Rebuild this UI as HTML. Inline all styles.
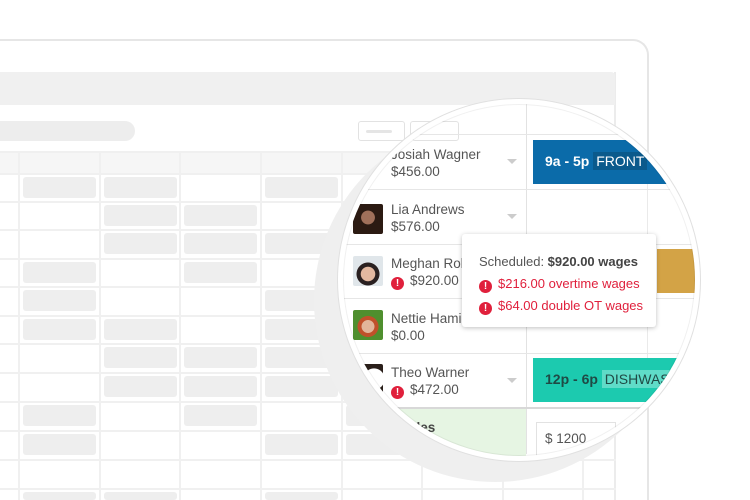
<!DOCTYPE html>
<html><head><meta charset="utf-8"><style>
*{margin:0;padding:0;box-sizing:border-box}
html,body{width:750px;height:500px;overflow:hidden}
body{background:#fff;position:relative;font-family:"Liberation Sans",sans-serif}
.a{position:absolute}
.frame{left:-20px;top:39px;width:669px;height:461px;border:2px solid #e6e6e6;border-bottom:none;border-radius:16px 16px 0 0}
.win{left:-10px;top:72px;width:626px;height:428px;border-right:2px solid #ececec}
.bar{left:0;top:72px;width:615px;height:33px;background:#f0f0f0;border-top-right-radius:4px}
.pill{left:-20px;top:121px;width:155px;height:20px;background:#ededed;border-radius:10px}
.hl{height:2px;background:#f0f0f0;left:0;width:616px}
.vl{width:2px;background:#f0f0f0;top:151px;height:349px}
.blk{background:#eeeeee;border-radius:3px;height:8px}
.b{background:#eeeeee;border-radius:3px;height:21px}
.circ{left:338px;top:99px;width:362px;height:362px;border-radius:50%;overflow:hidden;border:5px solid #fff;box-shadow:0 0 0 1px #e0e0e0;background:#fff}
.inner{position:absolute;left:-343px;top:-104px;width:750px;height:500px}
.shadow{left:314px;top:120px;width:362px;height:362px;border-radius:50%;background:#efefef}
.nm{font-size:13.5px;color:#555;line-height:17px}
.av{width:30px;height:30px;border-radius:2px}
.car{width:0;height:0;border-left:5px solid transparent;border-right:5px solid transparent;border-top:5px solid #ccc}
.ex{display:inline-block;width:13px;height:13px;border-radius:50%;background:#e0203c;color:#fff;font-size:10px;font-weight:bold;text-align:center;line-height:13px;vertical-align:-1px;margin-right:6px}
.red{color:#e0203c}
.rim{left:343px;top:104px;width:352px;height:352px;border-radius:50%;box-shadow:inset 0 0 0 1px rgba(0,0,0,.06)}
</style></head><body>
<div class="a frame"></div>
<div class="a win"></div>
<div class="a bar"></div>
<div class="a pill"></div>
<div class="a" style="left:358px;top:121px;width:47px;height:20px;border:1px solid #e2e2e2;border-radius:3px"></div>
<div class="a" style="left:366px;top:130px;width:26px;height:3px;background:#e5e5e5;border-radius:2px"></div>
<div class="a" style="left:410px;top:121px;width:47px;height:20px;border:1px solid #e2e2e2;border-radius:3px"></div>
<div class="a" style="left:0;top:151px;width:616px;height:23px;background:#f6f6f6"></div>
<div class="a hl" style="top:151px"></div>
<div class="a hl" style="top:173px"></div>
<div class="a hl" style="top:201px"></div>
<div class="a hl" style="top:229px"></div>
<div class="a hl" style="top:258px"></div>
<div class="a hl" style="top:286px"></div>
<div class="a hl" style="top:315px"></div>
<div class="a hl" style="top:343px"></div>
<div class="a hl" style="top:372px"></div>
<div class="a hl" style="top:401px"></div>
<div class="a hl" style="top:430px"></div>
<div class="a hl" style="top:459px"></div>
<div class="a hl" style="top:488px"></div>
<div class="a vl" style="left:18px"></div>
<div class="a vl" style="left:99px"></div>
<div class="a vl" style="left:179px"></div>
<div class="a vl" style="left:260px"></div>
<div class="a vl" style="left:341px"></div>
<div class="a vl" style="left:421px"></div>
<div class="a vl" style="left:502px"></div>
<div class="a vl" style="left:582px"></div>
<div class="a b" style="left:23px;top:177px;width:73px"></div><div class="a b" style="left:104px;top:177px;width:73px"></div><div class="a b" style="left:265px;top:177px;width:73px"></div>
<div class="a b" style="left:104px;top:205px;width:73px"></div><div class="a b" style="left:184px;top:205px;width:73px"></div>
<div class="a b" style="left:104px;top:233px;width:73px"></div><div class="a b" style="left:184px;top:233px;width:73px"></div><div class="a b" style="left:265px;top:233px;width:73px"></div>
<div class="a b" style="left:23px;top:262px;width:73px"></div><div class="a b" style="left:184px;top:262px;width:73px"></div>
<div class="a b" style="left:23px;top:290px;width:73px"></div><div class="a b" style="left:265px;top:290px;width:73px"></div>
<div class="a b" style="left:23px;top:319px;width:73px"></div><div class="a b" style="left:104px;top:319px;width:73px"></div><div class="a b" style="left:265px;top:319px;width:73px"></div>
<div class="a b" style="left:104px;top:347px;width:73px"></div><div class="a b" style="left:184px;top:347px;width:73px"></div><div class="a b" style="left:265px;top:347px;width:73px"></div>
<div class="a b" style="left:104px;top:376px;width:73px"></div><div class="a b" style="left:184px;top:376px;width:73px"></div><div class="a b" style="left:265px;top:376px;width:73px"></div>
<div class="a b" style="left:23px;top:405px;width:73px"></div><div class="a b" style="left:184px;top:405px;width:73px"></div><div class="a b" style="left:346px;top:405px;width:73px"></div>
<div class="a b" style="left:23px;top:434px;width:73px"></div><div class="a b" style="left:265px;top:434px;width:73px"></div><div class="a b" style="left:346px;top:434px;width:73px"></div>
<div class="a blk" style="left:23px;top:492px;width:73px"></div><div class="a blk" style="left:104px;top:492px;width:73px"></div><div class="a blk" style="left:265px;top:492px;width:73px"></div>

<div class="a shadow" style="height:362px"></div>
<div class="a circ"><div class="inner">
  <div class="a" style="left:358px;top:121px;width:47px;height:20px;border:1px solid #e2e2e2;border-radius:3px"></div>
  <div class="a" style="left:366px;top:130px;width:26px;height:3px;background:#e5e5e5;border-radius:2px"></div>
  <div class="a" style="left:412px;top:121px;width:47px;height:20px;border:1px solid #e2e2e2;border-radius:3px"></div>
  <div class="a" style="left:526px;top:104px;width:1px;height:350px;background:#e2e2e2"></div>
  <div class="a" style="left:647px;top:104px;width:1px;height:350px;background:#eaeaea"></div>
  <div class="a" style="left:330px;top:134px;width:400px;height:1px;background:#e6e6e6"></div>
  <div class="a" style="left:330px;top:189px;width:400px;height:1px;background:#e6e6e6"></div>
  <div class="a" style="left:330px;top:244px;width:400px;height:1px;background:#e6e6e6"></div>
  <div class="a" style="left:330px;top:298px;width:400px;height:1px;background:#e6e6e6"></div>
  <div class="a" style="left:330px;top:353px;width:400px;height:1px;background:#e6e6e6"></div>
  <div class="a" style="left:330px;top:407px;width:400px;height:2px;background:#d8d8d8"></div>
  <div class="a" style="left:330px;top:409px;width:196px;height:50px;background:#e6f5e3"></div>
  <div class="a" style="left:536px;top:422px;width:80px;height:40px;border:1px solid #e2e2e2;background:#fff"></div>
  <div class="a nm" style="left:545px;top:430px">$ 1200</div>
  <div class="a nm" style="left:400px;top:419px;font-weight:bold;color:#444">Sales</div>
  <div class="a nm" style="left:391px;top:146px">Josiah Wagner<br>$456.00</div>
  <div class="a car" style="left:507px;top:159px"></div>
  <div class="a av" style="left:353px;top:204px;background:radial-gradient(circle at 50% 45%,#a0705a 0 30%,#2b1a12 32%)"></div>
  <div class="a nm" style="left:391px;top:201px">Lia Andrews<br>$576.00</div>
  <div class="a car" style="left:507px;top:214px"></div>
  <div class="a av" style="left:353px;top:256px;background:radial-gradient(circle at 50% 60%,#e3b8a0 0 30%,#2a2020 32% 48%,#e0e6ea 50%)"></div>
  <div class="a nm" style="left:391px;top:255px">Meghan Robinson<br><span class="ex">!</span>$920.00</div>
  <div class="a av" style="left:353px;top:310px;background:radial-gradient(circle at 50% 55%,#e2b59a 0 28%,#c0502a 30% 46%,#4f8f2e 48%)"></div>
  <div class="a nm" style="left:391px;top:310px">Nettie Hamilton<br>$0.00</div>
  <div class="a av" style="left:353px;top:364px;background:radial-gradient(circle at 70% 50%,#fff 0 40%,#2a1f1a 42%)"></div>
  <div class="a nm" style="left:391px;top:364px">Theo Warner<br><span class="ex">!</span>$472.00</div>
  <div class="a car" style="left:507px;top:378px"></div>
  <div class="a" style="left:533px;top:140px;width:200px;height:44px;background:#0b6ba9"></div>
  <div class="a" style="left:545px;top:153px;font-size:14px;font-weight:bold;color:#fff">9a - 5p <span style="font-weight:normal;background:#0a5a8c;padding:1px 3px">FRONT</span></div>
  <div class="a" style="left:657px;top:249px;width:80px;height:44px;background:#d3a346"></div>
  <div class="a" style="left:533px;top:358px;width:200px;height:44px;background:#1ccaaf"></div>
  <div class="a" style="left:545px;top:371px;font-size:14px;font-weight:bold;color:#1f4a45">12p - 6p <span style="font-weight:normal;background:#5fdcc8;padding:1px 3px">DISHWASHER</span></div>
  <div class="a" style="left:462px;top:234px;width:194px;height:93px;background:#fff;border-radius:3px;box-shadow:0 1px 5px rgba(0,0,0,.25)"></div>
  <div class="a" style="left:479px;top:251px;font-size:13px;line-height:22px;color:#555;white-space:nowrap">Scheduled: <b style="color:#444">$920.00 wages</b><br><span class="red"><span class="ex">!</span>$216.00 overtime wages</span><br><span class="red"><span class="ex">!</span>$64.00 double OT wages</span></div>
</div></div>
<div class="a rim"></div>
</body></html>
